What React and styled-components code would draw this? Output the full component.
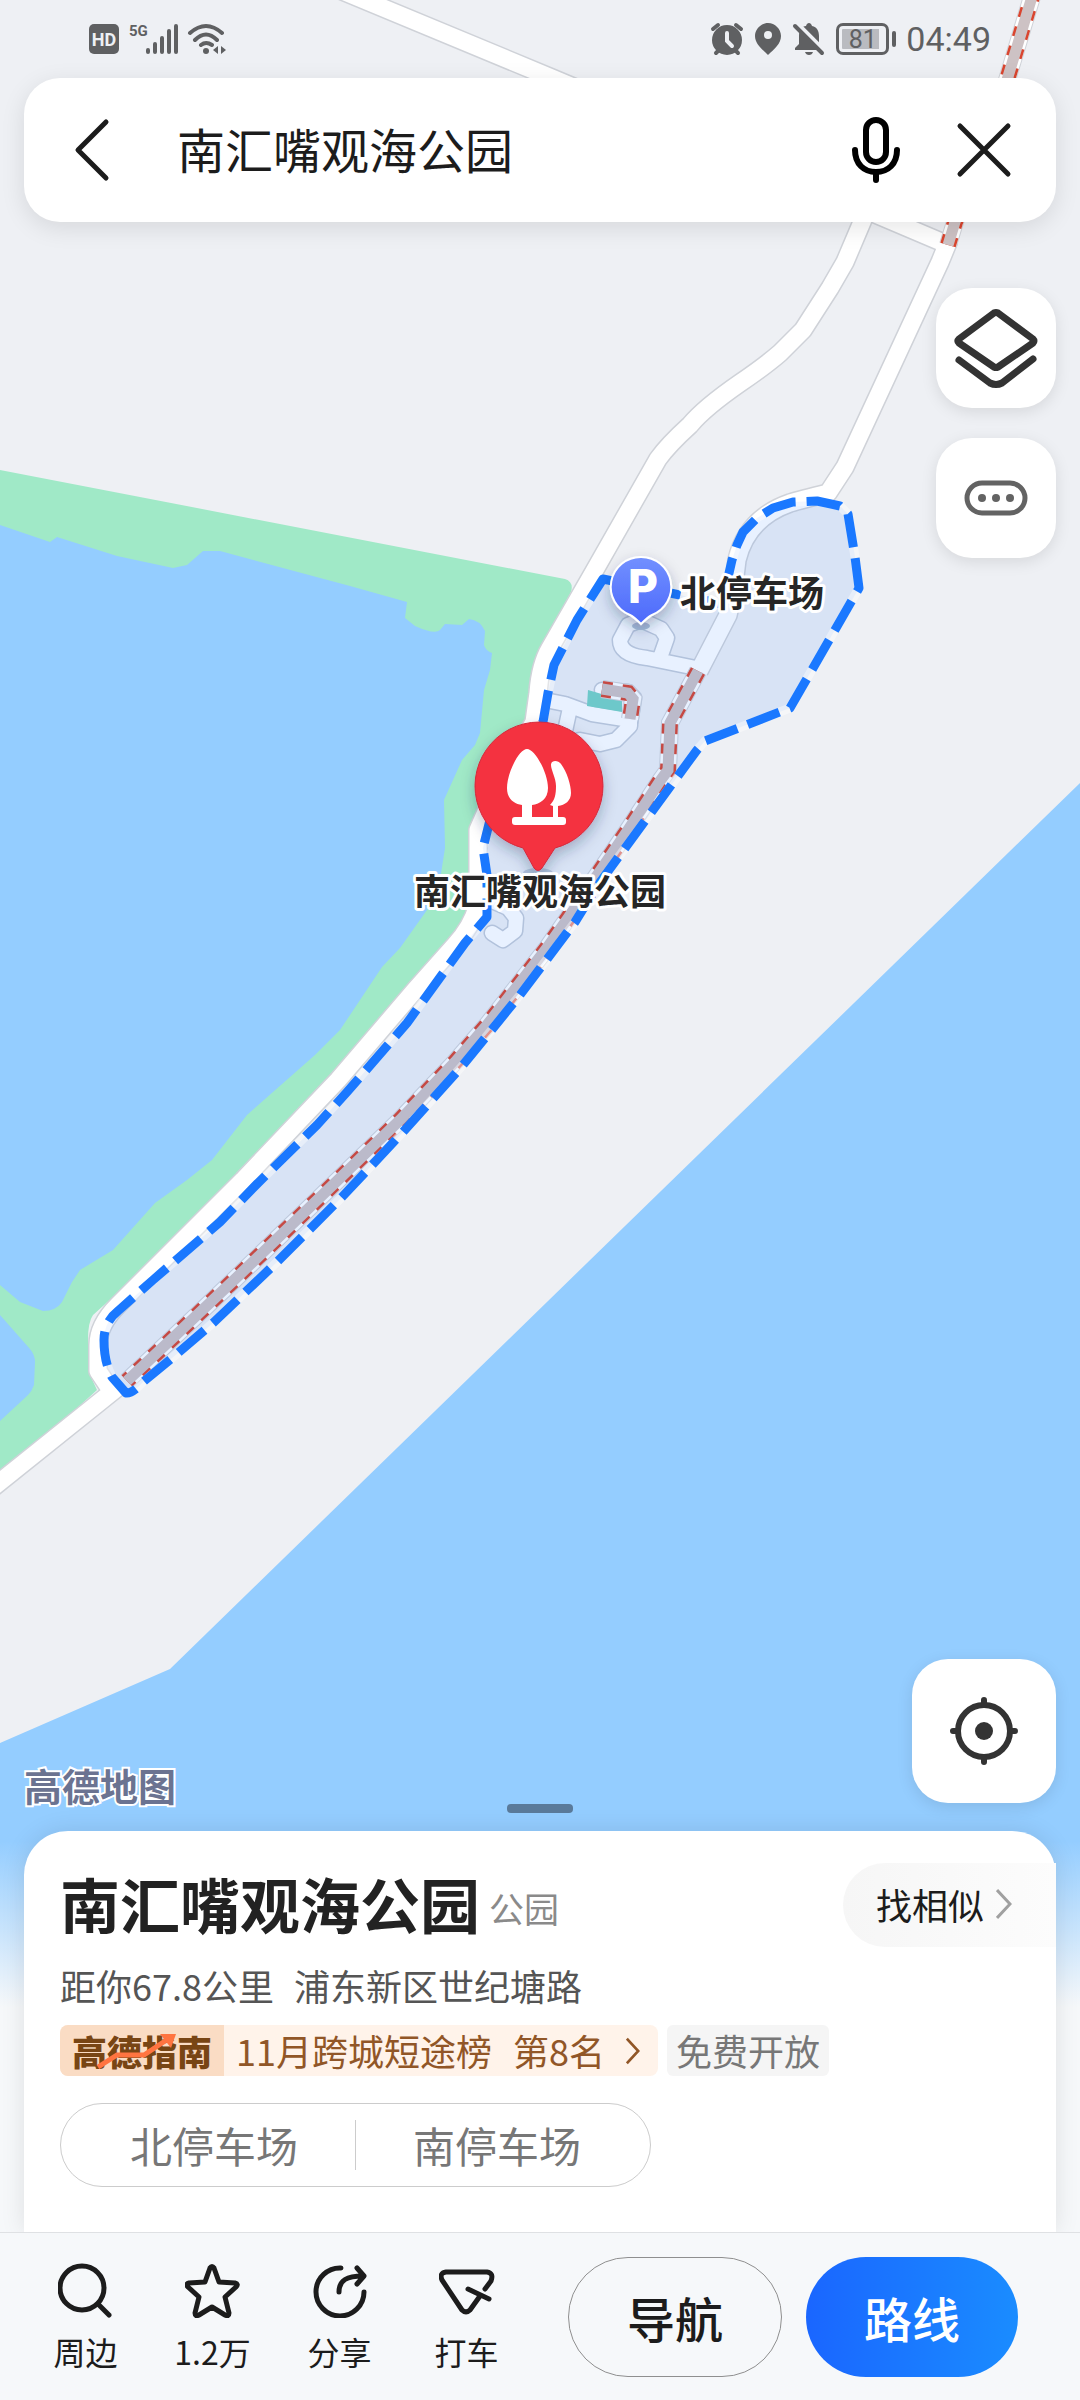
import React, { useState } from 'react';
import { styled, createGlobalStyle } from 'styled-components';

const PARK =
  'M603 579 L675 594 L722 604 L732 560 L737 545 L743 532 L757 518 L773 508 L793 502 L817 501 L840 506 L848 514 L855 557 L859 588 L790 708 L705 741 L697 750 L598 885 L575 922 L520 995 L463 1065 L403 1132 L342 1197 L277 1262 L213 1323 L178 1353 L143 1382 Q132 1394 126 1393 L112 1377 Q104 1362 104 1340 Q104 1322 118 1311 L153 1280 L220 1222 L257 1184 L317 1125 L347 1092 L407 1023 L465 943 L487 917 L487 875 L483 848 L500 780 L543 722 L548 693 L554 665 L577 620 Z';

const ROADS = [
  'M340 -10 L552 78 L880 216 L946 244',
  'M870 200 L862 222 L845 262 L830 288 L803 330 L780 353 Q765 366 740 383 Q704 408 690 425 Q668 445 658 459 L592 575 L550 648 Q540 665 538 693 L534 722 L500 780 L478 830 L478 873 L477 907 Q472 926 455 945 L415 990 L338 1080 L243 1180 L118 1305 Q98 1325 98 1345 L98 1371 L110 1389',
  'M122 1384 L-20 1498',
  'M949 240 L940 262 L845 467 L828 493 Q800 500 790 503 Q747 518 737 560 L733 593 L728 615 L699 671',
];

const LANES = [
  'M696 668 L647 658 Q620 655 620 640 L628 625 L641 620 L661 629 L667 638 L660 658',
  'M545 700 L565 704 L592 714 L630 720 L630 726 L616 740 L600 744 L580 740 L562 745 L570 708',
  'M602 690 L628 692 L634 698 L630 722',
  'M490 900 L508 908 L516 918 L515 931 L503 940 L492 933',
];

const REPAIRS = [
  'M1034 -10 L1007 80 L955 222 L948 245',
  'M698 671 L670 723 L668 770 L660 781 L628 830 L568 918 L547 948 L512 993 L487 1025 L455 1062 L400 1120 L338 1180 L233 1281 L177 1334 L127 1381',
  'M602 689 L628 693 L633 699 L630 719',
];

const MapCanvas = () => (
  <MapSvg viewBox='0 0 1080 2400' preserveAspectRatio='xMidYMin slice'>
    <defs>
      <linearGradient id='parking' x1='0' y1='0' x2='0' y2='1'>
        <stop offset='0' stopColor='#7290ff' />
        <stop offset='1' stopColor='#4c69fb' />
      </linearGradient>
      <filter id='pinShadow' x='-30%' y='-30%' width='160%' height='160%'>
        <feDropShadow dx='0' dy='6' stdDeviation='7' floodColor='#203050' floodOpacity='0.3' />
      </filter>
    </defs>

    {/* land, green and water */}
    <rect width='1080' height='2400' fill='#eef0f4' />
    <path
      d='M0 470 L565 579 Q574 582 571 592 L540 650 L534 722 L478 830 L477 907 L455 945 L243 1180 L93 1315 Q88 1322 88 1340 L90 1375 L97 1390 L0 1478 Z'
      fill='#a0e9c7'
    />
    <g fill='#94cdff'>
      <path d='M0 525 L50 542 L57 537 L117 556 L173 568 L187 565 L203 551 L220 551 L350 586 L407 602 L405 618 L415 626 Q435 635 440 630 L445 624 L462 625 L469 619 Q480 620 485 631 L484 645 Q486 651 492 653 L490 670 L484 690 L480 733 L475 745 L462 760 L444 800 L445 848 L440 880 L427 910 L400 948 L382 967 L340 1030 L315 1055 L247 1115 L212 1160 L187 1180 L155 1203 L113 1250 L80 1270 L72 1282 L62 1302 Q56 1311 43 1311 L20 1302 L0 1285 Z' />
      <path d='M0 1315 L30 1349 Q35 1355 35 1362 L34 1385 Q32 1391 28 1395 L0 1421 Z' />
      <path d='M1080 783 L170 1669 L0 1743 L0 2400 L1080 2400 Z' />
    </g>

    {/* roads */}
    <g fill='none' strokeLinejoin='round'>
      {ROADS.map((d) => (
        <path key={d} d={d} stroke='#cfd2d8' strokeWidth='20' />
      ))}
      {LANES.map((d) => (
        <path key={d} d={d} stroke='#c3cbd8' strokeWidth='17' strokeLinecap='round' />
      ))}
      {ROADS.map((d) => (
        <path key={d} d={d} stroke='#ffffff' strokeWidth='17' />
      ))}
      {LANES.map((d) => (
        <path key={d} d={d} stroke='#ffffff' strokeWidth='14' strokeLinecap='round' />
      ))}
    </g>
    <path d='M588 690 L587 706 L622 712 L622 700 Z' fill='#76d2c4' />

    {/* roads under repair */}
    <g fill='none'>
      {REPAIRS.map((d) => (
        <g key={d}>
          <path d={d} stroke='#cfd2d8' strokeWidth='18' />
          <path d={d} stroke='#ffffff' strokeWidth='16' />
          <path d={d} stroke='#d9452f' strokeWidth='16' strokeDasharray='10 10' />
          <path d={d} stroke='#cdc2c4' strokeWidth='11' />
        </g>
      ))}
    </g>

    {/* park outline */}
    <path d={PARK} fill='#1a78ff' fillOpacity='0.1' />
    <g fill='none' strokeLinejoin='round'>
      <path d={PARK} stroke='#ffffff' strokeOpacity='0.4' strokeWidth='9' />
      <path d={PARK} stroke='#1a78ff' strokeWidth='9' strokeDasharray='34 11' />
    </g>

    {/* parking pin */}
    <ellipse cx='641' cy='626' rx='9' ry='4' fill='#a9bbdc' />
    <path
      d='M641 557 A30 30 0 0 1 652 615 Q648 617 641 624 Q634 617 630 615 A30 30 0 0 1 641 557 Z'
      fill='url(#parking)'
      stroke='#ffffff'
      strokeWidth='2'
      filter='url(#pinShadow)'
    />
    <PinLetter x='643' y='603'>P</PinLetter>
    <PlaceLabel x='680' y='607'>北停车场</PlaceLabel>

    {/* place pin */}
    <ellipse cx='538' cy='873' rx='15' ry='5' fill='#b3c3dd' />
    <path
      d='M523 848 A64 64 0 1 1 555 848 L542 868 Q538 873 534 868 Z'
      fill='#f43040'
      stroke='#d42a3c'
      strokeWidth='1'
      filter='url(#pinShadow)'
    />
    <g fill='#ffffff'>
      <path d='M527 749 C535 749 548 773 548 788 C548 799 540 804 532 805 L532 818 L522 818 L522 805 C514 804 507 799 507 788 C507 773 519 749 527 749 Z' />
      <path d='M551 765 C551 760 558 760 561 764 C567 772 571 785 571 793 C571 801 565 805 558 806 L558 818 L553 818 L553 806 L550 805 C555 800 556 794 556 786 C556 778 551 770 551 765 Z' />
      <rect x='512' y='817' width='54' height='8' rx='3' />
    </g>
    <PlaceLabel x='540' y='905' textAnchor='middle'>
      南汇嘴观海公园
    </PlaceLabel>
  </MapSvg>
);

const StatusIcons = () => (
  <StatusBar>
    <StatusGroup>
      <HdBadge>HD</HdBadge>
      <NetworkType>5G</NetworkType>
      <svg width='34' height='32' viewBox='0 0 34 32' fill='none' stroke='#5f6062' strokeWidth='4' strokeLinecap='round'>
        <path d='M3 27 V29 M10 21 V29 M17 15 V29 M24 8 V29 M31 3 V29' />
      </svg>
      <WifiSvg width='40' height='32' viewBox='0 0 40 32' fill='none' stroke='#5f6062' strokeWidth='4' strokeLinecap='round'>
        <path d='M3 10 Q19 -4 35 10 M8 17 Q19 6 30 17 M14 22 Q19 18 25 22' />
        <circle cx='19' cy='28' r='3' fill='#5f6062' stroke='none' />
        <path d='M26 27 L31 23 V31 Z M39 27 L34 23 V31 Z' fill='#5f6062' stroke='none' />
      </WifiSvg>
    </StatusGroup>
    <StatusGroup>
      <svg width='34' height='34' viewBox='0 0 34 34'>
        <circle cx='17' cy='18' r='15' fill='#5f6062' />
        <path d='M3 7 L8 3 M31 7 L26 3 M6 31 L9 28 M28 31 L25 28' stroke='#5f6062' strokeWidth='4' strokeLinecap='round' />
        <path d='M17 11 V19 L22 24' stroke='#eef0f4' strokeWidth='4' strokeLinecap='round' fill='none' />
      </svg>
      <svg width='48' height='34' viewBox='0 0 48 34'>
        <path d='M24 1 C31 1 37 7 37 14 C37 22 30 27 24 33 C18 27 11 22 11 14 C11 7 17 1 24 1 Z' fill='#5f6062' />
        <circle cx='24' cy='13' r='4' fill='#eef0f4' />
      </svg>
      <svg width='34' height='34' viewBox='0 0 34 34'>
        <path d='M3 28 V26 L7 22 V14 C7 8 10 4 14 4 C15 0 19 0 20 4 C25 5 27 9 27 14 V22 L31 28 Z' fill='#5f6062' />
        <path d='M13 30 H21 Q20 33 17 33 Q14 33 13 30 Z' fill='#5f6062' />
        <path d='M5 1 L34 30' stroke='#eef0f4' strokeWidth='4' />
        <path d='M3 4 L30 31' stroke='#5f6062' strokeWidth='4' strokeLinecap='round' />
      </svg>
      <Battery>
        <BatteryCell>81</BatteryCell>
        <BatteryTip />
      </Battery>
      <Clock>04:49</Clock>
    </StatusGroup>
  </StatusBar>
);

const Chevron = ({ color, size }) => (
  <svg width={size / 2} height={size} viewBox='0 0 16 32' fill='none' stroke={color} strokeWidth='3'>
    <path d='M1 2 L14 16 L1 30' />
  </svg>
);

const NAV_ITEMS = [
  {
    label: '周边',
    icon: (
      <>
        <circle cx='24' cy='26' r='22' />
        <path d='M40 42 L51 53' />
      </>
    ),
  },
  {
    label: '1.2万',
    icon: <path d='M25 6 Q27 3 29 6 L34 20 L50 21 Q54 22 51 25 L40 35 L44 51 Q44 55 40 53 L27 45 L14 53 Q10 55 10 51 L14 35 L3 25 Q0 22 4 21 L20 20 Z' />,
  },
  {
    label: '分享',
    icon: (
      <>
        <path d='M29 6 A24 24 0 1 0 52 30' />
        <path d='M27 30 C27 18 35 14 51 14 M45 6 L52 14 L45 22' />
      </>
    ),
  },
  {
    label: '打车',
    icon: <path d='M46 27 L52 19 Q55 11 48 10 L7 10 Q0 11 3 18 L23 48 Q27 52 31 48 L41 34 M29 27 L50 37' />,
  },
];

const App = () => {
  const [keyword, setKeyword] = useState('南汇嘴观海公园');

  return (
    <>
      <GlobalStyle />
      <Screen>
        <MapCanvas />
        <StatusIcons />
        <SearchBar>
          <IconButton aria-label='返回'>
            <svg width='40' height='64' viewBox='0 0 40 64' fill='none' stroke='#1c1c1c' strokeWidth='5' strokeLinecap='round' strokeLinejoin='round'>
              <path d='M36 4 L8 32 L36 60' />
            </svg>
          </IconButton>
          <SearchInput aria-label='搜索' value={keyword} onChange={(e) => setKeyword(e.target.value)} />
          <SearchActions>
            <IconButton aria-label='语音'>
              <svg width='56' height='68' viewBox='0 0 56 68' fill='none' stroke='#000000' strokeLinecap='round'>
                <rect x='18' y='4' width='20' height='42' rx='10' strokeWidth='6' />
                <path d='M7 34 C7 48 16 56 28 56 C40 56 49 48 49 34 M28 57 V64' strokeWidth='6' />
              </svg>
            </IconButton>
            <IconButton aria-label='清除' onClick={() => setKeyword('')}>
              <svg width='60' height='60' viewBox='0 0 60 60' stroke='#1c1c1c' strokeWidth='5' strokeLinecap='round'>
                <path d='M6 6 L54 54 M54 6 L6 54' />
              </svg>
            </IconButton>
          </SearchActions>
        </SearchBar>

        <Tools>
          <MapButton $size={120} aria-label='图层'>
            <svg width='88' height='84' viewBox='0 0 88 84' fill='none' stroke='#333333' strokeWidth='7' strokeLinecap='round' strokeLinejoin='round'>
              <path d='M42 7 Q44 6 46 7 L81 33 Q83 35 81 37 L46 61 Q44 62 42 61 L7 37 Q5 35 7 33 Z' />
              <path d='M7 54 L38 77 Q44 80 50 77 L81 53' />
            </svg>
          </MapButton>
          <MapButton $size={120} aria-label='更多'>
            <svg width='64' height='36' viewBox='0 0 64 36'>
              <rect x='3' y='3' width='58' height='30' rx='15' fill='none' stroke='#636363' strokeWidth='5' />
              <g fill='#636363'>
                <circle cx='18' cy='18' r='4' />
                <circle cx='32' cy='18' r='4' />
                <circle cx='46' cy='18' r='4' />
              </g>
            </svg>
          </MapButton>
        </Tools>

        <MapFooter>
          <Watermark>高德地图</Watermark>
          <Handle />
          <MapButton $size={144} aria-label='定位'>
            <svg width='70' height='70' viewBox='0 0 70 70' fill='none' stroke='#333333' strokeWidth='6' strokeLinecap='round'>
              <circle cx='35' cy='35' r='26' />
              <path d='M35 4 V9 M35 61 V66 M4 35 H9 M61 35 H66' />
              <circle cx='35' cy='35' r='9' fill='#333333' stroke='none' />
            </svg>
          </MapButton>
        </MapFooter>

        <Sheet>
          <Card>
            <TitleRow>
              <Title>南汇嘴观海公园</Title>
              <Category>公园</Category>
              <Similar>
                找相似
                <Chevron color='#a0a0a0' size={32} />
              </Similar>
            </TitleRow>
            <Address>
              <span>距你67.8公里</span>
              <span>浦东新区世纪塘路</span>
            </Address>
            <Tags>
              <Ranking href='#ranking'>
                <Guide>
                  高德指南
                  <Trend viewBox='0 0 84 36' fill='none'>
                    <path d='M2 34 L21 22 L48 22 L72 6' stroke='#ff7440' strokeWidth='5' />
                    <path d='M64 1 L80 1 L75 15 Z' fill='#ff7440' />
                  </Trend>
                </Guide>
                <RankText>
                  <span>11月跨城短途榜</span>
                  <span>第8名</span>
                  <Chevron color='#915627' size={28} />
                </RankText>
              </Ranking>
              <FreeTag>免费开放</FreeTag>
            </Tags>
            <Parkings>
              <Parking>北停车场</Parking>
              <Parking>南停车场</Parking>
            </Parkings>
          </Card>
        </Sheet>

        <BottomBar>
          {NAV_ITEMS.map((item) => (
            <NavItem key={item.label}>
              <svg width='56' height='56' viewBox='0 0 56 56' fill='none' stroke='#1c1c1c' strokeWidth='5' strokeLinecap='round' strokeLinejoin='round'>
                {item.icon}
              </svg>
              {item.label}
            </NavItem>
          ))}
          <Actions>
            <Action>导航</Action>
            <Action $primary>路线</Action>
          </Actions>
        </BottomBar>
      </Screen>
    </>
  );
};

const GlobalStyle = createGlobalStyle`
  * {
    box-sizing: border-box;
  }

  body {
    margin: 0;
    font-family: 'Noto Sans CJK SC', sans-serif;
    color: #1c1c1c;
  }

  button,
  input {
    margin: 0;
    padding: 0;
    border: none;
    background: none;
    font-family: inherit;
    color: inherit;
  }

  svg {
    display: block;
    flex-shrink: 0;
  }
`;

const Screen = styled.main`
  position: relative;
  display: flex;
  flex-direction: column;
  min-height: 100vh;
  overflow: hidden;
  isolation: isolate;
`;

const MapSvg = styled.svg`
  position: absolute;
  inset: 0;
  z-index: -1;
  width: 100%;
  height: 100%;
`;

const PlaceLabel = styled.text`
  font-size: 36px;
  font-weight: 700;
  fill: #262626;
  stroke: #ffffff;
  stroke-width: 6px;
  stroke-linejoin: round;
  paint-order: stroke;
`;

const PinLetter = styled.text`
  font-family: Inter, sans-serif;
  font-size: 46px;
  font-weight: 800;
  fill: #ffffff;
  text-anchor: middle;
`;

const StatusBar = styled.header`
  display: flex;
  justify-content: space-between;
  align-items: center;
  height: 78px;
  padding: 0 89px;
  color: #5f6062;
`;

const StatusGroup = styled.div`
  display: flex;
  align-items: center;
  font-family: Roboto, sans-serif;
`;

const HdBadge = styled.span`
  width: 30px;
  height: 30px;
  border-radius: 5px;
  background-color: #5f6062;
  color: #eef0f4;
  font-size: 18px;
  font-weight: 700;
  line-height: 31px;
  text-align: center;
`;

const NetworkType = styled.span`
  align-self: flex-start;
  width: 16px;
  margin-left: 10px;
  font-size: 15px;
  font-weight: 700;
  line-height: 16px;
`;

const WifiSvg = styled.svg`
  margin-left: 8px;
`;

const Battery = styled.div`
  display: flex;
  align-items: center;
  gap: 3px;
  margin: 0 10px;
`;

const BatteryCell = styled.span`
  width: 53px;
  height: 32px;
  border: 3px solid #5f6062;
  border-radius: 7px;
  background: linear-gradient(90deg, #b9bbc0 90%, transparent 90%) content-box;
  padding: 3px;
  font-size: 25px;
  line-height: 21px;
  text-align: center;
`;

const BatteryTip = styled.span`
  width: 4px;
  height: 16px;
  border-radius: 2px;
  background-color: #5f6062;
`;

const Clock = styled.span`
  font-size: 34px;
  line-height: 40px;
`;

const SearchBar = styled.div`
  display: flex;
  align-items: center;
  gap: 40px;
  height: 144px;
  margin: 0 24px;
  padding: 0 42px 0 46px;
  border-radius: 36px;
  background-color: #ffffff;
  box-shadow: 0 6px 24px rgba(0, 0, 0, 0.1);
`;

const SearchActions = styled.div`
  display: flex;
  align-items: center;
  gap: 50px;
`;

const IconButton = styled.button`
  display: flex;
  cursor: pointer;
`;

const SearchInput = styled.input`
  flex: 1;
  min-width: 0;
  height: 76px;
  padding: 0 0 4px 27px;
  font-size: 48px;
  outline: none;
`;

const Tools = styled.div`
  display: flex;
  flex-direction: column;
  align-items: flex-end;
  gap: 30px;
  margin: 66px 24px auto;
`;

const MapButton = styled.button`
  display: flex;
  justify-content: center;
  align-items: center;
  width: ${(props) => props.$size}px;
  height: ${(props) => props.$size}px;
  border-radius: 36px;
  background-color: #ffffff;
  box-shadow: 0 4px 16px rgba(0, 0, 0, 0.1);
  cursor: pointer;
`;

const MapFooter = styled.div`
  display: grid;
  grid-template-columns: 1fr auto 1fr;
  align-items: end;
  padding: 0 24px 18px;

  ${MapButton} {
    justify-self: end;
    margin-bottom: 10px;
  }
`;

const Watermark = styled.span`
  padding-bottom: 8px;
  font-size: 38px;
  font-weight: 700;
  line-height: 40px;
  color: #6b7391;
  -webkit-text-stroke: 4px #ffffff;
  paint-order: stroke;
`;

const Handle = styled.div`
  width: 66px;
  height: 9px;
  border-radius: 4px;
  background-color: #5a7a9a;
`;

const Sheet = styled.section`
  padding: 0 24px;
  background: linear-gradient(rgba(246, 248, 250, 0) 10px, #f6f8fa 176px);
`;

const Card = styled.div`
  padding: 32px 0 45px 36px;
  border-radius: 44px 44px 0 0;
  background-color: #ffffff;
  box-shadow: 0 0 24px rgba(0, 0, 0, 0.1);
`;

const TitleRow = styled.div`
  display: flex;
  align-items: center;
  height: 84px;
`;

const Title = styled.h1`
  margin: 0;
  padding-bottom: 4px;
  font-size: 60px;
  font-weight: 700;
  line-height: 80px;
  color: #222222;
`;

const Category = styled.span`
  margin-left: 9px;
  padding-top: 4px;
  font-size: 35px;
  color: #8a8a8a;
`;

const Similar = styled.button`
  display: flex;
  align-items: center;
  gap: 12px;
  height: 84px;
  margin-left: auto;
  padding: 0 44px 2px 33px;
  border-radius: 42px 0 0 42px;
  background: linear-gradient(90deg, #f6f6f6, #fcfcfc);
  font-size: 36px;
  cursor: pointer;
`;

const Address = styled.p`
  display: flex;
  gap: 20px;
  margin: 12px 0 14px;
  font-size: 36px;
  line-height: 52px;
  color: #555555;
`;

const Tags = styled.div`
  display: flex;
  gap: 9px;
  font-size: 36px;
  line-height: 51px;
`;

const Ranking = styled.a`
  display: flex;
  border-radius: 8px;
  overflow: hidden;
  background-color: #fff3ea;
  color: #915627;
  text-decoration: none;
`;

const Guide = styled.span`
  position: relative;
  padding: 0 12px;
  background-color: #fadcc4;
  font-size: 35px;
  font-weight: 900;
  color: #784514;
`;

const Trend = styled.svg`
  position: absolute;
  top: 8px;
  left: 36px;
  width: 84px;
  height: 36px;
`;

const RankText = styled.span`
  display: flex;
  align-items: center;
  gap: 21px;
  padding: 0 18px 0 12px;
`;

const FreeTag = styled.span`
  padding: 0 9px;
  border-radius: 6px;
  background-color: #f5f5f5;
  color: #777777;
`;

const Parkings = styled.div`
  display: inline-flex;
  align-items: center;
  height: 84px;
  margin-top: 27px;
  padding: 0 12px;
  border: 1px solid #cccccc;
  border-radius: 42px;
`;

const Parking = styled.button`
  height: 50px;
  padding: 0 57px;
  font-size: 42px;
  line-height: 50px;
  color: #777777;
  cursor: pointer;

  & + & {
    border-left: 1px solid #cccccc;
  }
`;

const BottomBar = styled.nav`
  position: relative;
  display: flex;
  height: 168px;
  padding: 0 62px 0 22px;
  border-top: 1px solid #dfe1e4;
  background-color: #f6f8fa;
`;

const NavItem = styled.button`
  display: flex;
  flex-direction: column;
  align-items: center;
  gap: 9px;
  width: 127px;
  padding-top: 29px;
  font-size: 32px;
  line-height: 48px;
  cursor: pointer;
`;

const Actions = styled.div`
  display: flex;
  flex: 1;
  gap: 24px;
  padding: 24px 0 0 38px;
`;

const Action = styled.button`
  flex: 1;
  height: 120px;
  border: ${(props) => (props.$primary ? 'none' : '1px solid #8f8f8f')};
  border-radius: 60px;
  background: ${(props) => (props.$primary ? 'linear-gradient(90deg, #1a66ff, #1a8cff)' : 'none')};
  font-size: 48px;
  font-weight: 500;
  color: ${(props) => (props.$primary ? '#ffffff' : '#1c1c1c')};
  cursor: pointer;
`;

export default App;
